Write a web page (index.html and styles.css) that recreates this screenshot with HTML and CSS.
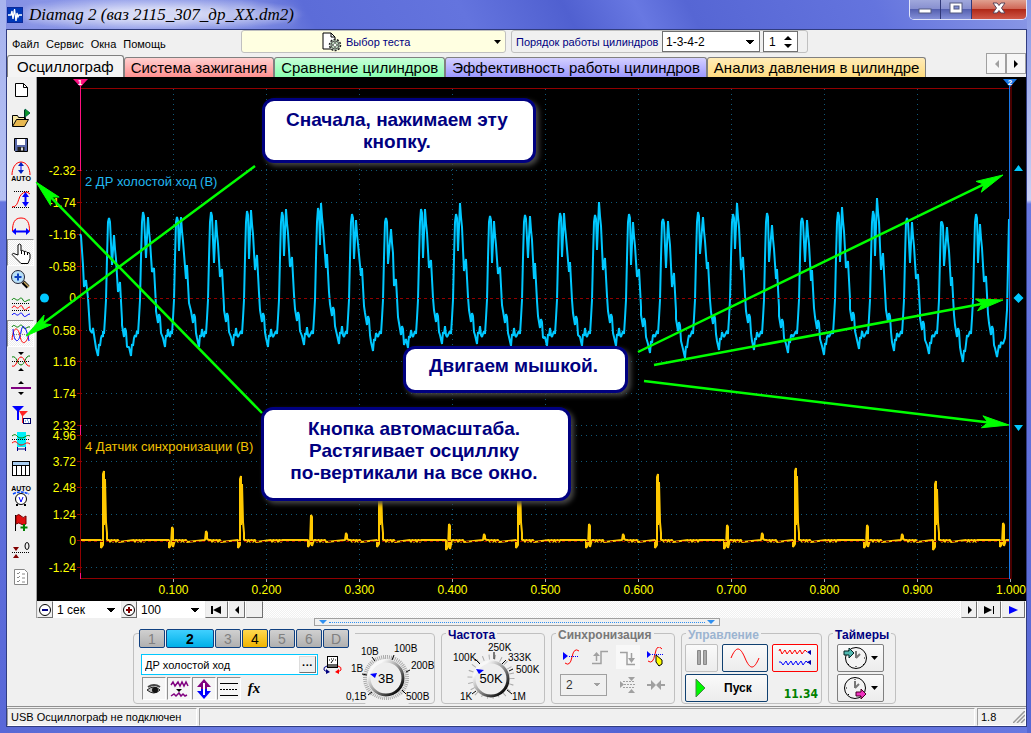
FILE: index.html
```html
<!DOCTYPE html>
<html lang="ru">
<head>
<meta charset="utf-8">
<title>Diamag 2</title>
<link rel="stylesheet" href="styles.css">
</head>
<body>
<div class="window">
  <header class="titlebar">
    <svg class="app-icon" width="16" height="16" viewBox="0 0 16 16"><rect width="16" height="16" fill="#0a2a9a"/><rect x="1" y="1" width="14" height="14" fill="#0038b8"/><path d="M1 8h3l1-4 1 8 1.500-10 1.500 12 1-8 1 4 1-2h3" fill="none" stroke="#fff" stroke-width="1.300"/></svg>
    <h1 class="title">Diamag 2 (ваз 2115_307_др_XX.dm2)</h1>
    <div class="window-controls">
      <button class="wc wc-min" aria-label="Свернуть"><svg width="14" height="14" viewBox="0 0 14 14"><rect x="1" y="8" width="12" height="4" fill="#fff" stroke="#555b80"/></svg></button>
      <button class="wc wc-max" aria-label="Развернуть"><svg width="14" height="14" viewBox="0 0 14 14"><rect x="1" y="2" width="12" height="10" fill="#fff" stroke="#555b80"/><rect x="5" y="5" width="5" height="3" fill="#8090d8" stroke="#555b80"/></svg></button>
      <button class="wc wc-close" aria-label="Закрыть"><svg width="16" height="14" viewBox="0 0 16 14"><path d="M2 2h4l2 2.500 2-2.500h4L10.500 7l3.500 5h-4L8 9.500 6 12H2l3.500-5z" fill="#fff" stroke="#5a4458"/></svg></button>
    </div>
  </header>

  <div class="client">
    <div class="menubar">
      <nav class="menu">
        <button>Файл</button><button>Сервис</button><button>Окна</button><button>Помощь</button>
      </nav>
      <button class="test-select">
        <svg width="20" height="20" viewBox="0 0 20 20"><path d="M1 1h8l4 4v12H1z" fill="#fff" stroke="#000"/><path d="M9 1v4h4" fill="none" stroke="#000"/><circle cx="13" cy="13" r="5.500" fill="#c4dcc4" stroke="#222" stroke-width="1.500" stroke-dasharray="2 1.400"/><circle cx="13" cy="13" r="4" fill="#bcd4bc" stroke="#555"/><path d="M13 10v6M10 13h6" stroke="#333"/><circle cx="13" cy="13" r="1.200" fill="#fff"/></svg>
        <span>Выбор теста</span>
        <svg class="caret" width="7" height="4" viewBox="0 0 7 4"><path d="M0 0h7L3.500 4z"/></svg>
      </button>
      <div class="order">
        <label for="order">Порядок работы цилиндров</label>
        <select id="order" class="flat-select order-select"><option>1-3-4-2</option></select>
        <span class="spin">
          <input type="number" value="1" aria-label="Номер цилиндра">
          <svg width="8" height="14" viewBox="0 0 8 14"><path d="M0 5h8L4 1zM0 9h8l-4 4z"/></svg>
        </span>
      </div>
    </div>

    <div class="tabs">
      <button class="tab tab-active">Осциллограф</button>
      <button class="tab tab-red">Система зажигания</button>
      <button class="tab tab-green">Сравнение цилиндров</button>
      <button class="tab tab-violet">Эффективность работы цилиндров</button>
      <button class="tab tab-amber">Анализ давления в цилиндре</button>
      <div class="tab-scroll">
        <button aria-label="Назад"><svg width="5" height="8" viewBox="0 0 5 8"><path d="M5 0v8L1 4z" fill="#a0a0a0"/></svg></button>
        <button aria-label="Вперёд"><svg width="5" height="8" viewBox="0 0 5 8"><path d="M0 0v8l4-4z"/></svg></button>
      </div>
    </div>

    <main class="main">
      <aside class="toolbar">
        <button class="tool" aria-label="Новый"><svg viewBox="0 0 24 24"><path d="M6.500 4.500h8l4 4v9h-12z" fill="#fff" stroke="#000"/><path d="M14.500 4.500v4h4" fill="none" stroke="#000"/></svg></button>
        <button class="tool" aria-label="Открыть"><svg viewBox="0 0 24 24"><path d="M3.500 20V9.500h5l1 2h7V14" fill="#f4e4a0" stroke="#000"/><path d="M3.500 20.500l4-7h12l-4 7z" fill="#e8b850" stroke="#000"/><path d="M15.500 14V4" stroke="#000"/><path d="M16 3v8l5-4z" fill="#0a9a20" stroke="#064"/></svg></button>
        <button class="tool" aria-label="Сохранить"><svg viewBox="0 0 24 24"><path d="M5.500 5.500h13v13h-12l-1-1z" fill="#5868a8" stroke="#000"/><rect x="8" y="6" width="8" height="6" fill="#fff"/><rect x="8.500" y="14" width="7" height="4" fill="#222"/><rect x="12" y="14.500" width="2" height="3" fill="#ddd"/></svg></button>
        <button class="tool" aria-label="Автомасштаб"><svg viewBox="0 0 24 24"><path d="M3 15c0-6 3-13 9-13s9 7 9 13" fill="none" stroke="#f00"/><path d="M12 4v9" stroke="#00f"/><path d="M9 6l3-4 3 4zM9 10l3 4 3-4z" fill="#0020c0"/><text x="12" y="21" text-anchor="middle" class="micro">AUTO</text></svg></button>
        <button class="tool" aria-label="Масштаб по вертикали"><svg viewBox="0 0 24 24"><path d="M5 4.500h16M3 20.500h18" stroke="#000" stroke-dasharray="1 1"/><path d="M3 20c9 0 4-15 15-15l3 2" fill="none" stroke="#f00"/><path d="M16.500 7v11" stroke="#00f" stroke-width="2"/><path d="M13 10l3.500-5 3.500 5zM13 15l3.500 5 3.500-5z" fill="#00f"/></svg></button>
        <button class="tool" aria-label="Масштаб по горизонтали"><svg viewBox="0 0 24 24"><path d="M3.500 17c0-8 2-13 8.500-13s8.500 5 8.500 13" fill="none" stroke="#f00"/><path d="M6 17.500h12" stroke="#00f" stroke-width="2"/><path d="M7 14v7l-4-3.500zM17 14v7l4-3.500z" fill="#00f"/></svg></button>
        <button class="tool tool-on" aria-label="Рука"><svg viewBox="0 0 24 24"><path d="M9 14V4q1.500-2 3 0v6q2-1.500 3 .5 2-1 3 1 3-.5 3 2v4l-2 5h-7l-6-6q-2-2-3-3 1-2 3-.5z" fill="#fff" stroke="#000"/><path d="M12.500 10v3M15.500 11v3M18.500 12v2" stroke="#000"/></svg></button>
        <button class="tool" aria-label="Лупа"><svg viewBox="0 0 24 24"><circle cx="9" cy="9" r="6.500" fill="#b8e0f8" stroke="#223"/><path d="M9 5.500v7M5.500 9h7" stroke="#1040c0" stroke-width="2"/><path d="M14 14l5 5" stroke="#000" stroke-width="4"/><path d="M15 14l5 5" stroke="#c8a860" stroke-width="1.500"/></svg></button>
        <button class="tool" aria-label="Каналы раздельно"><svg viewBox="0 0 24 24"><path d="M3 5c2-4 4 1 6 0s3-4 5 0 4-1 7 0" fill="none" stroke="#008000"/><path d="M3 13c3-5 4 1 6 0s3-5 5 0 4-1 7-1" fill="none" stroke="#f00"/><path d="M3 20c3-4 4 1 6 0s3-4 5 0 4-1 7-1" fill="none" stroke="#00f"/><path d="M3 8.500h18M3 15.500h18" stroke="#000" stroke-dasharray="1 1"/></svg></button>
        <button class="tool tool-on" aria-label="Каналы вместе"><svg viewBox="0 0 24 24"><path d="M3 5c2-4 4 1 6 0s3-4 5 0 4-1 7 0" fill="none" stroke="#008000"/><path d="M3 18c1-14 6-14 8-4s6 8 9-1" fill="none" stroke="#f00"/><path d="M4 7c1 15 6 15 8 3s6-2 8 9" fill="none" stroke="#00f"/><path d="M3 12.500h18" stroke="#888" stroke-dasharray="1 1"/></svg></button>
        <button class="tool" aria-label="Совместить"><svg viewBox="0 0 24 24"><path d="M3 8c5-2 5 8 9 8s4-10 9-9" fill="none" stroke="#008000"/><path d="M3 17c5 2 5-9 9-9s4 10 9 9" fill="none" stroke="#f00"/><path d="M3 12.500h18" stroke="#000" stroke-dasharray="1 1"/><path d="M9 3h6l-3 3zM9 22h6l-3-3z"/></svg></button>
        <button class="tool" aria-label="Сдвиг"><svg viewBox="0 0 24 24"><path d="M2 12h20" stroke="#800080" stroke-width="2"/><path d="M9 8h6l-3-3zM9 16h6l-3 3z"/></svg></button>
        <button class="tool" aria-label="Маркеры"><svg viewBox="0 0 24 24"><path d="M3 3h12l-5 5v9H8V8z" fill="#00f"/><path d="M10 8h9l-5 5v7h-1v-7z" fill="#f22"/><rect x="14.500" y="15.500" width="7" height="5" fill="#fff" stroke="#006"/><path d="M16 18h1m1-1h1m0 2h1" stroke="#06c"/></svg></button>
        <button class="tool" aria-label="Интервал"><svg viewBox="0 0 24 24"><rect x="8" y="2" width="9" height="15" fill="#00f0f8"/><path d="M3 6c5-4 4 2 9 2s5-4 9-2" fill="none" stroke="#008000"/><path d="M3 13c5-4 5 2 9 2s5-4 9-1" fill="none" stroke="#f00"/><path d="M3 9.500h18" stroke="#000" stroke-dasharray="1 1"/><path d="M8 19h9M8.500 17v4M16.500 17v4" stroke="#000080"/></svg></button>
        <button class="tool" aria-label="Таблица"><svg viewBox="0 0 24 24"><rect x="3.500" y="4.500" width="17" height="14" fill="#fff" stroke="#000"/><rect x="4" y="5" width="16" height="3" fill="#a8ccf0"/><path d="M3 8.500h18M7.500 8v11M12.500 8v11M16.500 8v11" stroke="#000"/></svg></button>
        <button class="tool" aria-label="Авто напряжение"><svg viewBox="0 0 24 24"><text x="12" y="7" text-anchor="middle" class="micro">AUTO</text><circle cx="12" cy="15" r="5.500" fill="#fff" stroke="#000"/><path d="M4 10q8-4 16 0" fill="none" stroke="#04f" stroke-width="1.500" stroke-dasharray="3 1"/><path d="M10 13l2 5 2-5" fill="none" stroke="#00f"/><path d="M7 21h2m6 0h2" stroke="#000" stroke-width="2"/></svg></button>
        <button class="tool" aria-label="Добавить флаг"><svg viewBox="0 0 24 24"><path d="M6.500 4v16" stroke="#000"/><path d="M7 5q3-3 5 0t5 0v8q-3 2-5 0t-5 0z" fill="#e01010" stroke="#700"/><path d="M15 13v7M11.500 16.500h7" stroke="#008000" stroke-width="2"/></svg></button>
        <button class="tool" aria-label="Установить ноль"><svg viewBox="0 0 24 24"><path d="M3 14.500h18" stroke="#000" stroke-dasharray="1 1"/><path d="M4 9h6l-3 4zM4 20h6l-3-4z" fill="#800000"/><ellipse cx="18" cy="8" rx="2" ry="3.500" fill="none" stroke="#000"/></svg></button>
        <button class="tool" aria-label="Отчёт"><svg viewBox="0 0 24 24"><path d="M5.500 4.500h10l3 3v12h-13z" fill="#fff" stroke="#888"/><path d="M8 8l1 1 2-2M8 12l1 1 2-2M8 16l1 1 2-2M13 9h3M13 13h3M13 17h3" fill="none" stroke="#888"/></svg></button>
      </aside>

      <div class="workspace">
        <div class="scope">
          <svg id="plot" class="plot" viewBox="37 77 989 524">
            <g id="grid"></g>
            <path class="frame" d="M80.500 88.500h930M81 578.500h930M80.500 88v490M1011 83v496"/>
            <path d="M80.500 84v87M80.500 425v10M80.500 573v6" stroke="#ff1080"/>
            <g id="labels"></g>
            <text x="85" y="186" class="name-cyan">2 ДР холостой ход (В)</text>
            <text x="85" y="451" class="name-gold">4 Датчик синхронизации (В)</text>
            <polyline id="wave" class="wave-cyan"/>
            <polyline id="sync" class="wave-gold"/>
            <path class="zero" d="M82 298.500h927M82 541.500h927"/>
            <path d="M1009.500 84v495" stroke="#1878e8"/>
            <path d="M73 79h15l-7.500 8z" fill="#ff1080"/><text x="80" y="85" text-anchor="middle" class="mark">1</text>
            <path d="M1003 79h14l-7 8z" fill="#1878e8"/><text x="1010" y="85" text-anchor="middle" class="mark">2</text>
            <g fill="#00c8ff"><circle cx="44.500" cy="298" r="4.500"/><path d="M1014 171h9l-4.500-6zM1014 425h9l-4.500 6zM1018.500 293l5 5-5 5-5-5z"/></g>
            <g id="arrows" class="arrows"></g>
          </svg>
          <p class="callout callout-a">Сначала, нажимаем эту<br>кнопку.</p>
          <p class="callout callout-b">Двигаем мышкой.</p>
          <p class="callout callout-c">Кнопка автомасштаба.<br>Растягивает осциллку<br>по-вертикали на все окно.</p>
        </div>
        <div class="timebar">
          <button class="tb tb-zoom" aria-label="Уменьшить"><svg width="14" height="14" viewBox="0 0 14 14"><circle cx="7" cy="7" r="5.500" fill="#fff" stroke="#000"/><path d="M4 7h6" stroke="#000080" stroke-width="2"/></svg></button>
          <select class="flat-select time-select" aria-label="Развёртка"><option>1 сек</option></select>
          <button class="tb tb-zoom" aria-label="Увеличить"><svg width="14" height="14" viewBox="0 0 14 14"><circle cx="7" cy="7" r="5.500" fill="#fff" stroke="#000"/><path d="M4 7h6M7 4v6" stroke="#800000" stroke-width="2"/></svg></button>
          <select class="flat-select time-select" aria-label="Масштаб"><option>100</option></select>
          <button class="tb tb-wide" aria-label="В начало"><svg width="11" height="8" viewBox="0 0 11 8"><path d="M0 0h2v8H0zM2 4l8-4v8z"/></svg></button>
          <button class="tb tb-arrow" aria-label="Влево"><svg width="5" height="8" viewBox="0 0 5 8"><path d="M4 0v8L0 4z"/></svg></button>
          <div class="track"><button class="tb tb-thumb" aria-label="Ползунок"></button></div>
          <button class="tb tb-arrow" aria-label="Вправо"><svg width="5" height="8" viewBox="0 0 5 8"><path d="M1 0v8l4-4z"/></svg></button>
          <button class="tb tb-wide" aria-label="В конец"><svg width="11" height="8" viewBox="0 0 11 8"><path d="M9 0h1v8H9zM0 0l8 4-8 4z"/></svg></button>
          <button class="tb tb-wide" aria-label="Воспроизвести"><svg width="9" height="8" viewBox="0 0 9 8"><path d="M0 0l9 4-9 4z" fill="#00f"/></svg></button>
        </div>
      </div>
    </main>

    <div class="splitter"><span class="split-tri"></span><span class="split-line"></span><span class="split-tri"></span></div>

    <div class="panels">
      <section class="group group-channel">
        <div class="channel">
          <div class="channel-tabs">
            <button>1</button><button class="ch-2">2</button><button>3</button><button class="ch-4">4</button><button>5</button><button>6</button><button>D</button>
          </div>
          <div class="channel-name">
            <div class="name-box"><input type="text" value="ДР холостой ход" aria-label="Имя канала"><button aria-label="Выбрать">···</button></div>
            <svg width="20" height="20" viewBox="0 0 20 20"><rect x="5.500" y="1.500" width="10" height="11" fill="#fff" stroke="#000"/><path d="M6 9h9v3H6z" fill="#666"/><path d="M7 5h1m1-1h1m1 0h1m1 1h1M9 8l2-3" stroke="#000"/><path d="M5 11q-4 1-3 4l3 2" fill="none" stroke="#000080"/><path d="M4 14l4 3-4 2z" fill="#000080"/><path d="M16 11q4 1 3 4l-3 2" fill="none" stroke="#f00"/><path d="M17 14l-4 3 4 2z" fill="#f00"/></svg>
          </div>
          <div class="channel-tools">
            <button aria-label="Показать"><svg width="22" height="20" viewBox="0 0 22 20"><path d="M4 11q7-6 13 0-6 6-13 0z" fill="#bbb" stroke="#222"/><circle cx="12" cy="11" r="3" fill="#111"/><path d="M5 8q6-4 12 0" fill="none" stroke="#444" stroke-width="2"/></svg></button>
            <button aria-label="Фильтр"><svg width="22" height="20" viewBox="0 0 22 20"><path d="M3 6l2-3 2 4 3-4 2 4 2-4 2 4 2-4 2 4M3 17l3-2 2 2 3-3 2 3 2-2 2 2 2-1" fill="none" stroke="#800080" stroke-width="1.500"/><path d="M8 10h6l-3 3z"/></svg></button>
            <button aria-label="Инверсия"><svg width="22" height="20" viewBox="0 0 22 20"><path d="M11 0l7 8h-4v2H8V8H4z" fill="#800080"/><path d="M11 20l7-8h-4v-2H8v2H4z" fill="#00f"/><path d="M11 4v12" stroke="#fff" stroke-width="2"/></svg></button>
            <button aria-label="Уровни"><svg width="22" height="20" viewBox="0 0 22 20"><path d="M2 4.500h18M2 16.500h18" stroke="#000"/><path d="M2 10.500h18" stroke="#000" stroke-dasharray="2 1"/></svg></button>
            <button class="fx" aria-label="Функция">fx</button>
          </div>
        </div>
        <svg class="dial" width="90" height="66" viewBox="346 638 90 66">
          <defs><linearGradient id="rim" x1="0" y1="0" x2="1" y2="1"><stop offset="0.200" stop-color="#f8f8f8"/><stop offset="0.500" stop-color="#999"/><stop offset="0.900" stop-color="#000"/></linearGradient></defs>
          <circle cx="387" cy="678" r="21" fill="none" stroke="#aaa" stroke-width="4" stroke-dasharray="1 1" pathLength="132"/>
          <path d="M366 704l6-9q15 10 30 0l8 9z" fill="#f0f0f0"/>
          <path d="M369 695l4-3M363 674l5 1M373 657l3 4M395 655l-2 5M411 670l-4 2M407 694l-4-4" stroke="#000"/>
          <circle cx="387" cy="678" r="17" fill="#eee" stroke="url(#rim)" stroke-width="3"/>
          <path d="M371 674l7-1-2 5z" fill="#00f"/>
          <g class="dial-text"><text x="347" y="700">0,1В</text><text x="352" y="672">1В</text><text x="362" y="655">10В</text><text x="395" y="652">100В</text><text x="412" y="669">200В</text><text x="407" y="700">500В</text></g>
          <text x="387" y="683" text-anchor="middle" class="dial-value">3В</text>
        </svg>
      </section>

      <section class="group group-rate">
        <h2>Частота</h2>
        <svg class="dial" width="96" height="60" viewBox="446 642 96 60">
          <circle cx="491" cy="678" r="21" fill="none" stroke="#aaa" stroke-width="5" stroke-dasharray="1 5"/>
          <path d="M474 704l4-9q13 8 26 0l6 9z" fill="#f0f0f0"/>
          <path d="M472 694l4-3M475 659l5 5M494 652v7M506 660l-4 4M513 669l-4 2M512 694l-5-4" stroke="#000"/>
          <circle cx="491" cy="679" r="17" fill="#eee" stroke="url(#rim)" stroke-width="3"/>
          <path d="M476 669l8 1-5 4z" fill="#00f"/>
          <g class="dial-text"><text x="460" y="700">1K</text><text x="453" y="661">100K</text><text x="488" y="651">250K</text><text x="508" y="661">333K</text><text x="516" y="673">500K</text><text x="512" y="700">1M</text></g>
          <text x="491" y="683" text-anchor="middle" class="dial-value">50K</text>
        </svg>
      </section>

      <section class="group group-sync">
        <h2 class="muted">Синхронизация</h2>
        <div class="sync-grid">
          <button aria-label="Уровень"><svg width="20" height="20" viewBox="0 0 20 20"><path d="M3 16q5 4 7-6t7-6" fill="none" stroke="#f00"/><path d="M7 9.500h10" stroke="#00f" stroke-dasharray="1 1"/><path d="M1 5v8l5-4z" fill="#00f"/></svg></button>
          <button aria-label="Фронт"><svg width="20" height="20" viewBox="0 0 20 20"><path d="M2 16.500h9v-12h7M6.500 14V8" fill="none" stroke="#a0a0a0" stroke-width="1.500"/><path d="M3 9h7L6.500 5z" fill="#a0a0a0"/></svg></button>
          <button class="pressed" aria-label="Спад"><svg width="20" height="20" viewBox="0 0 20 20"><path d="M2 5.500h7v12h8M13.500 6v6" fill="none" stroke="#a0a0a0" stroke-width="1.500"/><path d="M10 11h7l-3.500 5z" fill="#a0a0a0"/></svg></button>
          <button aria-label="Указать уровень"><svg width="20" height="20" viewBox="0 0 20 20"><path d="M2 14q5 4 7-7t7-5" fill="none" stroke="#f00"/><path d="M6 7.500h12" stroke="#00f" stroke-dasharray="1 1"/><path d="M1 4v7l4-3.500z" fill="#00f"/><path d="M10 8l6 5v4l-3 2-3-4z" fill="#ff0" stroke="#000"/></svg></button>
          <select class="flat-select sync-select" aria-label="Канал синхронизации"><option>2</option></select>
          <button aria-label="Гистерезис"><svg width="20" height="20" viewBox="0 0 20 20"><path d="M2 6v7l4-3.500z" fill="#a0a0a0"/><path d="M5 6.500h12M6 9.500h11M5 12.500h12" stroke="#a0a0a0" stroke-dasharray="2 1"/><path d="M10 2h7l-3.500 4zM10 18h7l-3.500-4z" fill="#a0a0a0"/></svg></button>
          <button aria-label="Центр"><svg width="20" height="20" viewBox="0 0 20 20"><path d="M1 9h4V5l5 5-5 5v-4H1zM19 9h-4V5l-5 5 5 5v-4h4z" fill="#a0a0a0"/></svg></button>
        </div>
      </section>

      <section class="group group-control">
        <h2 class="pale">Управление</h2>
        <div class="control-grid">
          <button class="push off" aria-label="Пауза"><svg width="12" height="16" viewBox="0 0 12 16"><path d="M1.500.5h3v14h-3zM7.500.5h3v14h-3z" fill="#aaa" stroke="#888"/></svg></button>
          <button class="push" aria-label="Синус"><svg width="30" height="20" viewBox="0 0 30 20"><path d="M1 10C6-2 10-2 15 10s9 12 14 0" fill="none" stroke="#f00"/></svg></button>
          <button class="push push-red" aria-label="Каналы"><svg width="34" height="20" viewBox="0 0 34 20"><path d="M1 3l1-2 2 5 3-4 2 4 3-4 2 4 3-4 2 4 3-4 2 4 3-4 2 2" fill="none" stroke="#f00"/><path d="M1 14h2l2 3 3-4 2 4 3-4 2 4 3-4 2 4 3-4 2 4 3-4 2 2" fill="none" stroke="#00f"/><path d="M33 2v5l-4-3zM33 12v5l-4-3z" fill="#00a"/></svg></button>
          <button class="push push-start"><svg width="11" height="20" viewBox="0 0 11 20"><path d="M1 1l9 9-9 9z" fill="#00f800" stroke="#484"/></svg><span>Пуск</span></button>
          <output>11.34</output>
        </div>
      </section>

      <section class="group group-timers">
        <h2>Таймеры</h2>
        <div class="timers">
          <button class="push timer" aria-label="Таймер запуска"><svg width="24" height="24" viewBox="0 0 24 24"><circle cx="13" cy="12" r="10.500" fill="#f4f4f4" stroke="#000"/><path d="M13 12V5M13 12l4-4" stroke="#777" stroke-width="2"/><path d="M13 20v1M21 12h1M6 18l-1 1M20 18l1 1" stroke="#000"/><path d="M1 5h5V2l5 5-5 5V9H1z" fill="#50b8b0" stroke="#022"/></svg><svg width="7" height="4" viewBox="0 0 7 4"><path d="M0 0h7L3.500 4z"/></svg></button>
          <button class="push timer" aria-label="Таймер остановки"><svg width="24" height="24" viewBox="0 0 24 24"><circle cx="12" cy="12" r="10.500" fill="#f4f4f4" stroke="#000"/><path d="M12 12V5M12 12l4-4" stroke="#777" stroke-width="2"/><path d="M12 3v1M4 12H3M6 18l-1 1" stroke="#000"/><path d="M13 16h5v-3l5 5-5 5v-3h-5z" fill="#f030c0" stroke="#402"/></svg><svg width="7" height="4" viewBox="0 0 7 4"><path d="M0 0h7L3.500 4z"/></svg></button>
        </div>
      </section>
    </div>

    <footer class="statusbar">
      <span class="st-device">USB Осциллограф не подключен</span>
      <span class="st-main"></span>
      <span class="st-version">1.8<svg width="12" height="12" viewBox="0 0 12 12"><path d="M0 12L12 0M4 12l8-8M8 12l4-4" stroke="#999" stroke-width="1.500"/></svg></span>
    </footer>
  </div>
</div>
<script src="scope.js"></script>
</body>
</html>
```
FILE: styles.css
```css
* { box-sizing: border-box; }
body {
  margin: 0;
  font-family: "Liberation Sans", Arial, sans-serif;
  font-size: 11px;
  color: #000;
}
button, input, select, output { font: inherit; color: inherit; }
button { padding: 0; border: 0; background: none; }
svg { display: block; flex: none; }
h1, h2, p { margin: 0; }

.window {
  height: 100vh;
  display: flex;
  flex-direction: column;
  padding: 0 4px 6px 6px;
  background:
    linear-gradient(180deg, #a8b4ee 0, #b4c0f4 200px, #6474de 202px, #5868d8 100%) left / 6px 100% no-repeat,
    linear-gradient(180deg, #8898e6 0, #c8d0f6 200px, #6878e0 204px, #5868d4 100%) right / 4px 100% no-repeat,
    linear-gradient(90deg, #5868d4, #7080e4 30%, #5464d4 60%, #6878e0) #6070dc;
}
.titlebar {
  flex: none;
  height: 29px;
  display: flex;
  align-items: center;
  gap: 6px;
  padding-left: 1px;
  background:
    radial-gradient(ellipse 150px 18px at 150px 14px, #ffffffa0 30%, transparent),
    linear-gradient(62deg, #8490e4 0, #8c98e8 12%, #7c8ae2 24%, #5c6cd8 30%, #6474de 45%, #5060d0 55%, #6878e2 62%, #5666d4 67%, #6474de 85%, #8a98e6 100%);
}
.title {
  flex: 1;
  font: italic 17px "Liberation Serif", serif;
  white-space: nowrap;
  text-shadow: 0 0 8px #fff;
}
.window-controls {
  align-self: flex-start;
  display: flex;
  height: 20px;
  border: 1px solid #e0e4fa;
  border-top: 0;
  border-radius: 0 0 5px 5px;
  overflow: hidden;
}
.wc {
  display: flex;
  align-items: center;
  justify-content: center;
  width: 31px;
  padding-bottom: 3px;
  border-right: 1px solid #303878;
  background: linear-gradient(#a0a8dc 0, #8890d0 45%, #5560b0 50%, #8490d8 100%);
}
.wc-close { width: 54px; border-right: 0; background: linear-gradient(#e0a090 0, #d06858 45%, #b02818 50%, #d05848 100%); }

.client {
  flex: 1;
  min-height: 0;
  display: flex;
  flex-direction: column;
  border: 1px solid #303c80;
  background: #f0f0f0;
}
.menubar { flex: none; height: 25px; display: flex; align-items: flex-start; }
.menu { width: 234px; display: flex; gap: 7px; padding: 8px 0 0 5px; }
.test-select {
  width: 265px;
  height: 23px;
  display: flex;
  align-items: center;
  gap: 4px;
  padding: 0 4px 0 80px;
  border: 1px solid #c0c0c0;
  border-radius: 3px;
  background: #ffffe1;
  color: #000080;
}
.caret { margin-left: auto; }
.order {
  display: flex;
  align-items: center;
  height: 23px;
  margin-left: 5px;
  padding: 0 9px 0 4px;
  border: 1px solid #c0c0c0;
  border-radius: 3px;
  color: #000080;
}
.order label { width: 146px; white-space: nowrap; }
.flat-select {
  appearance: none;
  border: 1px solid #707070;
  border-radius: 0;
  padding: 0 3px;
  color: #000;
  background-color: #fff;
  background-image: linear-gradient(45deg, transparent 50%, #000 50%), linear-gradient(315deg, transparent 50%, #000 50%);
  background-size: 4px 4px;
  background-position: right 9px center, right 5px center;
  background-repeat: no-repeat;
}
.order-select { width: 98px; height: 21px; font-size: 12px; }
.spin {
  display: flex;
  align-items: center;
  width: 35px;
  height: 21px;
  margin-left: 3px;
  padding: 0 5px;
  border: 1px solid #707070;
  background: #fff;
  color: #000;
}
.spin input { width: 15px; padding: 0; border: 0; background: none; font-size: 12px; appearance: textfield; -moz-appearance: textfield; }
.spin input::-webkit-inner-spin-button { display: none; }

.tabs { flex: none; height: 22px; display: flex; align-items: flex-end; }
.tab {
  height: 20px;
  padding: 0 6px;
  border: 1px solid #808080;
  border-bottom: 0;
  border-radius: 3px 3px 0 0;
  font-size: 15px;
  line-height: 18px;
  white-space: nowrap;
}
.tab-active { height: 22px; padding: 0 9px; background: #f4f4f4; }
.tab-red { background: linear-gradient(#ffd0d0, #ff9090); }
.tab-green { background: linear-gradient(#c8ffd8, #88ffb0); }
.tab-violet { background: linear-gradient(#d4d0ff, #9c98ff); }
.tab-amber { background: linear-gradient(#ffecb8, #ffdc80); }
.tab-scroll { align-self: flex-start; display: flex; margin-left: auto; margin-top: -2px; }
.tab-scroll button {
  width: 20px;
  height: 21px;
  display: grid;
  place-items: center;
  border: 1px solid #a0a0a0;
  background: #f6f6f6;
}

.main { flex: 1; min-height: 0; display: flex; }
.toolbar {
  width: 30px;
  padding-right: 2px;
  border-right: 1px solid #a0a0a0;
}
.tool { display: grid; place-items: center; width: 27px; height: 27px; border: 1px solid transparent; }
.tool svg { width: 24px; height: 24px; }
.tool-on { border-color: #909090 #fff #fff #909090; background: repeating-conic-gradient(#fff 0 25%, #ececec 0 50%) 0 0 / 2px 2px; }
.micro { font: bold 7px "Liberation Sans", sans-serif; }

.workspace { flex: 1; min-width: 0; display: flex; flex-direction: column; }
.scope { flex: 1; min-height: 0; position: relative; background: #000; }
.plot { width: 100%; height: 100%; overflow: visible; position: relative; }
.frame { fill: none; stroke: #900000; }
.grid { fill: none; stroke: #105878; stroke-dasharray: 1 4; }
.zero { fill: none; stroke: #900000; stroke-dasharray: 3 3; }
.axis { font-size: 12px; fill: #ffff00; }
.name-cyan { font-size: 13px; fill: #20b8f0; }
.name-gold { font-size: 13px; fill: #f0c000; }
.mark { font-size: 8px; font-weight: bold; fill: #fff; }
.wave-cyan { fill: none; stroke: #00c8ff; stroke-width: 2; stroke-linejoin: bevel; }
.wave-gold { fill: none; stroke: #ffc800; stroke-width: 2; stroke-linejoin: bevel; }
.arrows { stroke: #00ff00; stroke-width: 2.5; fill: #00ff00; }
.callout {
  position: absolute;
  border: 3px solid #000080;
  border-radius: 12px;
  background: #fff;
  color: #000080;
  font-size: 19px;
  font-weight: bold;
  line-height: 22px;
  text-align: center;
  white-space: nowrap;
  padding: 8px 4px 0 0;
  box-shadow: 3px 3px 5px #444;
}
.callout-a { left: 225px; top: 21px; width: 274px; height: 65px; }
.callout-b { left: 366px; top: 269px; width: 225px; height: 47px; padding-top: 6px; }
.callout-c { left: 224px; top: 330px; width: 310px; height: 94px; }

.timebar { flex: none; height: 17px; display: flex; background: #fff; gap: 1px; padding-right: 1px; }
.tb {
  flex: none;
  display: grid;
  place-items: center;
  height: 17px;
  border: 1px solid;
  border-color: #e8e8e8 #707070 #707070 #e8e8e8;
  background: #f0f0f0;
}
.tb-zoom { width: 16px; }
.tb-wide { width: 23px; }
.tb-arrow { width: 16px; }
.tb-thumb { width: 17px; }
.time-select { width: 66px; border: 0; font-size: 12px; }
.track { flex: 1; background: repeating-conic-gradient(#fff 0 25%, #f0f0f0 0 50%) 0 0 / 2px 2px; }

.splitter {
  flex: none;
  align-self: center;
  width: 406px;
  height: 8px;
  display: flex;
  align-items: center;
  padding: 0 4px;
  gap: 2px;
  border: 1px solid #a0a0a0;
}
.split-tri { border: 4px solid transparent; border-top: 4px solid #3090f0; border-bottom: 0; }
.split-line { flex: 1; border-top: 1px dotted #3090f0; }

.panels { flex: none; display: flex; gap: 6px; padding: 7px 0 2px 126px; height: 80px; }
.group { display: flex; flex-direction: column; border: 1px solid #c0c0c0; border-radius: 4px; }
.group h2 {
  align-self: flex-start;
  margin: -6px 0 0 4px;
  padding: 0 2px;
  background: #f0f0f0;
  color: #000080;
  font-size: 12px;
  line-height: 14px;
}
.group h2.muted { color: #787878; }
.group h2.pale { color: #9cb4d0; }
.group-channel { width: 302px; flex-direction: row; justify-content: space-between; }
.channel { width: 211px; margin-top: -5px; padding-left: 5px; }
.channel-tabs { display: flex; gap: 1px; width: 216px; background: #f0f0f0; }
.channel-tabs button {
  width: 26px;
  height: 19px;
  border: 1px solid #104080;
  border-radius: 2px;
  background: linear-gradient(#d0d0d0, #b0b0b0);
  color: #808080;
  font-size: 14px;
  line-height: 16px;
}
.channel-tabs .ch-2 { width: 48px; background: linear-gradient(#40d0ff, #00b0e8); color: #000; font-weight: bold; }
.channel-tabs .ch-4 { background: linear-gradient(#ffd850, #f0b400); color: #000; }
.channel-name { display: flex; align-items: center; gap: 4px; margin: 6px 0 2px 2px; }
.name-box { display: flex; width: 177px; height: 21px; border: 1px solid #00c8ff; background: #fff; }
.name-box input { flex: 1; min-width: 0; padding: 0 3px; border: 0; background: none; }
.name-box button { width: 17px; margin: 1px; border: 1px solid; border-color: #ddd #707070 #707070 #ddd; background: #f0f0f0; font-weight: bold; line-height: 12px; }
.channel-tools { display: flex; gap: 1px; margin-left: 3px; }
.channel-tools button {
  display: grid;
  place-items: center;
  width: 24px;
  height: 23px;
  border: 1px solid;
  border-color: #909090 #fff #fff #909090;
  background: #f6f6f6;
}
.channel-tools .fx { border-color: transparent; background: none; font: italic bold 15px "Liberation Serif", serif; }
.dial { margin-top: 4px; }
.dial-text { font-size: 10px; fill: #000; }
.dial-value { font-size: 13px; }
.group-rate { width: 104px; }
.group-rate .dial { margin: 0 0 0 4px; }
.group-sync { width: 124px; }
.sync-grid {
  display: grid;
  grid-template-columns: repeat(4, 24px);
  grid-auto-rows: 24px;
  gap: 4px;
  margin: 3px 0 0 8px;
}
.sync-grid button { display: grid; place-items: center; }
.sync-grid .pressed { background: #f8f8f8; }
.sync-select { grid-column: span 2; width: 47px; height: 22px; align-self: center; background-color: #f0f0f0; font-size: 12px; padding-left: 5px; border-color: #a0a0a0; color: #333; background-image: linear-gradient(45deg, transparent 50%, #a0a0a0 50%), linear-gradient(315deg, transparent 50%, #a0a0a0 50%); }
.group-control { width: 141px; }
.control-grid {
  display: grid;
  grid-template-columns: 33px 46px 46px;
  grid-auto-rows: 28px;
  gap: 2px 4px;
  margin: 2px 0 0 3px;
}
.push {
  display: flex;
  align-items: center;
  justify-content: center;
  border: 1px solid #104070;
  border-radius: 2px;
  background: linear-gradient(#fafafa, #ececec);
}
.off { border-color: #c0c0c0; }
.push-red { border-color: #f00; }
.push-start { grid-column: span 2; gap: 18px; justify-content: flex-start; padding-left: 9px; font-weight: bold; font-size: 12px; }
.control-grid output { align-self: end; justify-self: end; padding-bottom: 1px; color: #008000; font: bold 12px "DejaVu Sans Condensed", "DejaVu Sans", sans-serif; white-space: nowrap; }
.group-timers { width: 68px; }
.timers { display: flex; flex-direction: column; gap: 2px; margin: 2px 0 0 8px; }
.timer { width: 47px; height: 28px; gap: 4px; border-color: #808080; }

.statusbar { flex: none; height: 20px; display: flex; gap: 2px; border-top: 1px solid #909090; padding-top: 1px; }
.statusbar span { border: 1px solid; border-color: #a0a0a0 #fff #fff #a0a0a0; padding: 2px 3px; white-space: nowrap; }
.st-device { width: 190px; }
.st-main { flex: 1; }
.statusbar .st-version { width: 49px; display: flex; justify-content: space-between; align-items: flex-end; padding-right: 0; }
```
FILE: scope.js
```js
const NS = "http://www.w3.org/2000/svg";
const add = (parent, tag, attrs, text) => {
  const el = document.createElementNS(NS, tag);
  for (const k in attrs) el.setAttribute(k, attrs[k]);
  if (text) el.textContent = text;
  parent.appendChild(el);
};
const byId = (id) => document.getElementById(id);

// Scale labels and grid
const rows = [
  [171, "-2.32"], [203, "-1.74"], [235, "-1.16"], [267, "-0.58"], [298, "0"],
  [331, "0.58"], [362, "1.16"], [394, "1.74"], [426, "2.32"], [436, "4.96"],
  [462, "3.72"], [488, "2.48"], [515, "1.24"], [541, "0"], [568, "-1.24"]
];
rows.forEach(([y, label]) => {
  if (label !== "0") add(byId("grid"), "path", { class: "grid", d: `M81 ${y - 0.5}h928` });
  add(byId("grid"), "path", { class: "frame", d: `M77 ${y - 0.5}h5` });
  add(byId("labels"), "text", { class: "axis", x: 76, y: y + 4, "text-anchor": "end" }, label);
});
for (let i = 1; i <= 10; i++) {
  const x = 80.5 + i * 93;
  if (i < 10) add(byId("grid"), "path", { class: "grid", d: `M${x} 89v489` });
  add(byId("grid"), "path", { d: `M${x} 579v3`, stroke: "#aaa" });
  add(byId("labels"), "text", { class: "axis", x: i < 10 ? x : 1026, y: 594, "text-anchor": i < 10 ? "middle" : "end" }, (i / 10).toFixed(3));
}

// Each pulse: first peak, dip, second peak, shoulder low, shoulder high, knee, trough
const pulses = [
  [109,218,112,265,114,235,118,292,120,282,124,337,131,356],
  [143,212,146,258,148,217,152,272,154,268,158,323,165,347],
  [177,217,179,251,181,217,186,279,187,265,193,323,199,347],
  [211,212,214,263,216,220,220,277,222,269,226,322,233,346],
  [247,211,249,259,251,210,255,270,257,255,262,322,268,347],
  [282,212,284,256,286,209,290,267,292,257,297,321,304,345],
  [318,208,320,245,321,203,326,268,327,254,332,316,339,344],
  [352,214,354,259,356,220,361,276,362,268,367,325,373,351],
  [386,218,388,264,391,229,394,286,396,279,401,335,408,348],
  [421,209,423,258,425,209,429,268,431,260,436,322,442,344],
  [456,214,458,251,460,203,464,271,466,259,471,322,477,344],
  [490,216,492,263,494,221,498,274,500,267,505,323,511,346],
  [525,215,528,258,530,216,534,279,535,263,540,328,547,346],
  [560,213,562,257,564,213,569,272,570,262,575,325,582,346],
  [595,215,597,250,599,202,603,270,605,258,610,323,616,346],
  [629,214,631,265,633,222,637,277,639,269,643,327,650,353],
  [663,219,666,268,668,221,672,287,674,273,678,331,685,358],
  [698,212,700,254,703,217,707,269,708,262,713,324,719,350],
  [733,214,735,249,737,203,741,270,743,257,748,323,754,350],
  [767,213,769,262,772,225,776,279,777,269,781,328,788,353],
  [802,218,805,262,807,220,811,281,812,270,817,329,824,355],
  [838,212,840,262,842,207,846,268,848,261,852,321,859,349],
  [873,211,875,256,877,198,881,270,883,253,888,322,894,351],
  [907,218,910,263,912,222,916,279,918,274,922,330,929,354],
  [942,222,944,266,947,227,951,286,952,277,957,337,963,362],
  [976,214,978,263,980,224,984,282,986,276,991,335,997,357]
];
const wave = [[80,234],[81,236],[83,265],[84,287],[86,280],[88,298],[90,330],[92,333],[93,328],[96,348],[98,356]];
let lastX = 98, lastY = 356;
const rise = (x) => {
  wave.push([lastX + 1, lastY - 12], [lastX + 2, lastY - 10], [lastX + 3, lastY - 18], [lastX + 4, 335], [lastX + 5, 337]);
  wave.push([x - 6, 331], [x - 5, 334], [x - 4, 318], [x - 3, 300], [x - 2, 258], [x - 1, 222]);
};
pulses.forEach(([ax, ay, bx, by, cx, cy, dx, dy, ex, ey, kx, ky, tx, ty]) => {
  rise(ax);
  wave.push([ax, ay], [ax + 1, ay + 4], [bx, by], [cx, cy], [cx + 1, cy + 14], [cx + 2, cy + 24], [dx, dy], [ex, ey],
    [ex + 2, ey + 38], [kx - 2, ky - 12], [kx, ky], [kx + 1, ky - 9], [kx + 2, ky - 6], [kx + 3, ky + 10], [tx - 2, ty - 9], [tx, ty]);
  lastX = tx;
  lastY = ty;
});
wave.push([999,345],[1000,348],[1001,342],[1003,344],[1005,338],[1007,310],[1008,265],[1009,219]);
byId("wave").setAttribute("points", wave.join(" "));

// Sync sensor: x, top of spike, depth of the undershoot
const spikes = [
  [104,471,548],[172,527,548],[206,531,541],[241,476,548],[311,515,547],[346,533,541],[380,478,547],
  [449,524,550],[484,534,541],[519,474,548],[589,524,548],[623,534,541],[658,474,548],[727,525,549],
  [762,533,541],[796,468,547],[867,525,548],[902,534,541],[936,481,550],[1003,523,547]
];
const sync = [[81,540]];
spikes.forEach(([x, top, low]) => {
  const tall = top < 500;
  if (low > 541) sync.push([x - 3, 540], [x - 3, low], [x - 1, low - 3]);
  else sync.push([x - 1, 540]);
  if (tall) sync.push([x - 1, top + 3], [x, top], [x, 525], [x + 1, top + 8], [x + 2, 522], [x + 3, 533]);
  else sync.push([x, top], [x + 1, top + 2], [x + 1, low === 541 ? 539 : low - 1]);
  sync.push([x + 3, 540]);
  for (let i = 5; i < 16; i += 1) if (x + i < 1008) sync.push([x + i, i % 3 === 0 ? 542 : 540]);
  if (x + 28 < 1000 && tall) for (let i = 26; i < 39; i += 1) sync.push([x + i + 4, i % 3 === 0 ? 542 : 540]);
});
sync.push([1009, 540]);
byId("sync").setAttribute("points", sync.join(" "));

// Pointer arrows: start and tip
[[255,166,26,336],[262,413,36,182],[638,352,1003,175],[654,365,1003,300],[644,381,1009,425]].forEach(([x1, y1, x2, y2]) => {
  const a = Math.atan2(y2 - y1, x2 - x1), c = Math.cos(a), s = Math.sin(a);
  const at = (l, w) => `${x2 - l * c - w * s} ${y2 - l * s + w * c}`;
  add(byId("arrows"), "path", { d: `M${x1} ${y1}L${at(18, 0)}` });
  add(byId("arrows"), "path", { d: `M${x2} ${y2}L${at(27, 6)}L${at(21, 0)}L${at(27, -6)}z`, "stroke-width": 1 });
});
```
